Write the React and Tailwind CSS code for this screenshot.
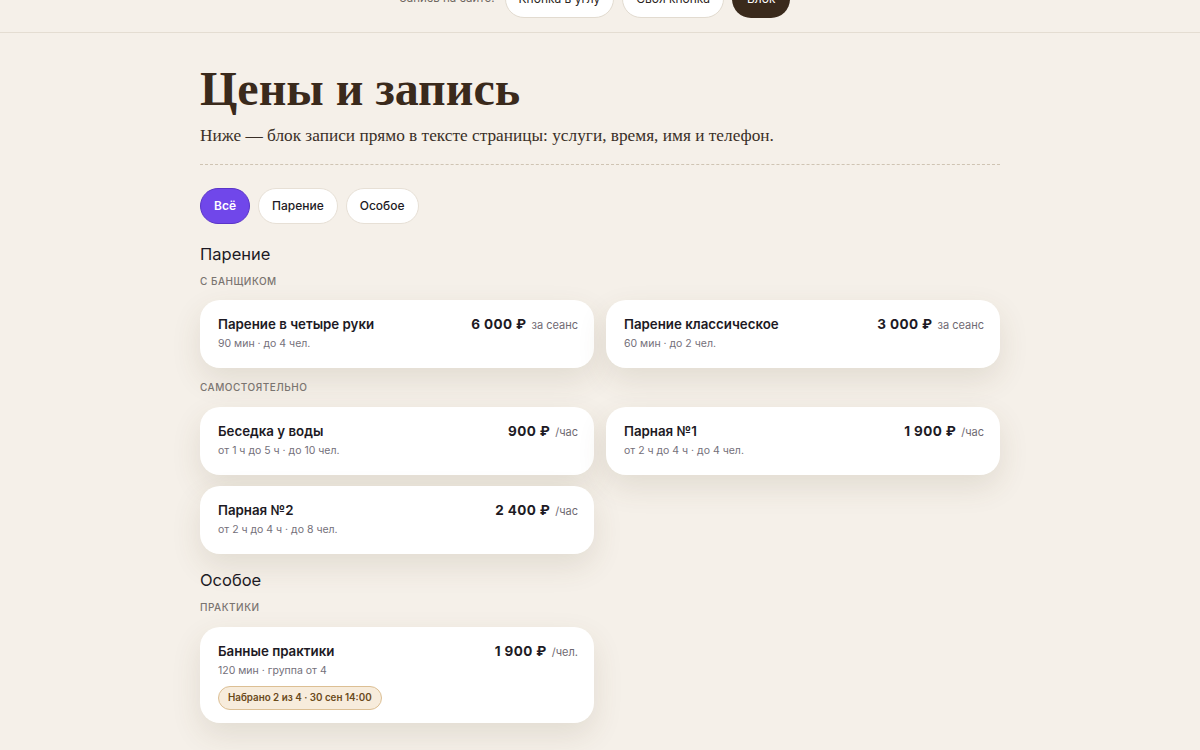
import React from "react";

const inter = { fontFamily: "Inter, 'Noto Sans', sans-serif" };
const serif = { fontFamily: "'Liberation Serif', 'DejaVu Serif', serif" };

function Card({ title, sub, price, unit, badge }) {
  return (
    <div className={"bg-white rounded-[20px] pl-[18px] pr-[16px] pt-[14px] shadow-[0_12px_30px_rgba(90,70,40,0.12)] " + (badge ? "pb-[13px]" : "pb-[16px]")}>
      <div className="flex items-start justify-between">
        <div className="flex flex-col">
          <div className="text-[13.3px] font-semibold text-[#1d1a24] leading-[20px]">{title}</div>
          <div className="text-[10.5px] text-[#74707a] leading-[16px] mt-[2px]">{sub}</div>
        </div>
        <div className="flex items-baseline gap-[5px]">
          <span className="text-[13.5px] font-bold text-[#1d1a24] leading-[20px] tracking-[0.03em]">{price}</span>
          <span className="text-[11px] text-[#6f6a72]">{unit}</span>
        </div>
      </div>
      {badge && (
        <div className="mt-[7px] inline-flex items-center h-[24px] px-[9px] rounded-full bg-[#f7ecdc] border border-[#dcbf94] text-[9.8px] font-semibold text-[#6a4a1b]">
          {badge}
        </div>
      )}
    </div>
  );
}

function Label({ children }) {
  return (
    <div className="text-[10px] uppercase tracking-[0.05em] text-[#7a7470] font-medium leading-[14px]">
      {children}
    </div>
  );
}

export default function App() {
  return (
    <div className="min-h-screen bg-[#f5f0e9]" style={inter}>
      <div className="h-[33px] border-b border-[#e4ddd2] overflow-hidden flex items-end justify-center pb-[14px]">
        <div className="flex items-center gap-[8px] ml-[-10px]">
          <span className="text-[11.5px] text-[#6f6760] mr-[2px]">Запись на сайте:</span>
          <div className="h-[38px] px-[13px] flex items-center rounded-full bg-white border border-[#e2dbd0] text-[12px] text-[#2a2320]">Кнопка в углу</div>
          <div className="h-[38px] px-[13px] flex items-center rounded-full bg-white border border-[#e2dbd0] text-[12px] text-[#2a2320]">Своя кнопка</div>
          <div className="h-[38px] px-[15px] flex items-center rounded-full bg-[#3a2a1c] text-[12px] text-white">Блок</div>
        </div>
      </div>

      <div className="w-[800px] mx-auto pt-[28px]">
        <h1 className="text-[48px] leading-[56px] font-bold text-[#3a2a1c]" style={serif}>
          Цены и запись
        </h1>
        <p className="mt-[6px] text-[17.3px] leading-[26px] text-[#3a2f27]" style={serif}>
          Ниже — блок записи прямо в тексте страницы: услуги, время, имя и телефон.
        </p>
        <div className="mt-[15px] border-t border-dashed border-[#cfc4b3]"></div>

        <div className="mt-[23px] flex gap-[8px]">
          <div className="h-[36px] px-[13px] flex items-center rounded-full bg-[#7047ea] border border-[#5a35c8] text-white text-[12px] font-semibold">Всё</div>
          <div className="h-[36px] px-[13px] flex items-center rounded-full bg-white border border-[#e7e0d6] text-[#1d1a24] text-[12px] font-medium">Парение</div>
          <div className="h-[36px] px-[13px] flex items-center rounded-full bg-white border border-[#e7e0d6] text-[#1d1a24] text-[12px] font-medium">Особое</div>
        </div>

        <div className="mt-[19px] text-[16.5px] leading-[22px] text-[#1d1a24]">Парение</div>
        <div className="mt-[9px]"><Label>С банщиком</Label></div>
        <div className="mt-[12px] grid grid-cols-2 gap-[12px]">
          <Card title="Парение в четыре руки" sub="90 мин · до 4 чел." price="6 000 ₽" unit="за сеанс" />
          <Card title="Парение классическое" sub="60 мин · до 2 чел." price="3 000 ₽" unit="за сеанс" />
        </div>

        <div className="mt-[12px]"><Label>Самостоятельно</Label></div>
        <div className="mt-[13px] grid grid-cols-2 gap-x-[12px] gap-y-[11px]">
          <Card title="Беседка у воды" sub="от 1 ч до 5 ч · до 10 чел." price="900 ₽" unit="/час" />
          <Card title="Парная №1" sub="от 2 ч до 4 ч · до 4 чел." price="1 900 ₽" unit="/час" />
          <Card title="Парная №2" sub="от 2 ч до 4 ч · до 8 чел." price="2 400 ₽" unit="/час" />
        </div>

        <div className="mt-[15px] text-[16.5px] leading-[22px] text-[#1d1a24]">Особое</div>
        <div className="mt-[9px]"><Label>Практики</Label></div>
        <div className="mt-[13px] grid grid-cols-2 gap-[12px]">
          <Card title="Банные практики" sub="120 мин · группа от 4" price="1 900 ₽" unit="/чел." badge="Набрано 2 из 4 · 30 сен 14:00" />
        </div>
        <div className="h-[40px]"></div>
      </div>
    </div>
  );
}
